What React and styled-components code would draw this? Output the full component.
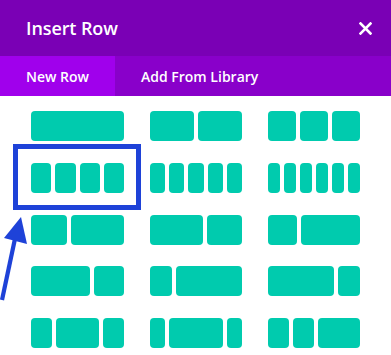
import styled, { createGlobalStyle } from "styled-components";

const GlobalStyle = createGlobalStyle`
  body {
    margin: 0;
    background: #ffffff;
    font-family: "Open Sans", "Liberation Sans", sans-serif;
  }
`;

const Modal = styled.div`
  position: relative;
  width: 391px;
  height: 355px;
  overflow: hidden;
  background: #ffffff;
`;

const Header = styled.div`
  height: 56px;
  display: flex;
  align-items: center;
  justify-content: space-between;
  padding: 0 19px 0 26px;
  background: #7a00b5;
  color: #ffffff;
`;

const Title = styled.h1`
  margin: 0;
  font-size: 18px;
  font-weight: 600;
  letter-spacing: -0.1px;
`;

const CloseButton = styled.button`
  width: 14px;
  height: 14px;
  padding: 0;
  border: none;
  background: none;
  display: flex;
  align-items: center;
  justify-content: center;
  cursor: pointer;
`;

const Tabs = styled.div`
  height: 40px;
  display: flex;
  background: #8900ca;
`;

const Tab = styled.div`
  display: flex;
  align-items: center;
  padding: 0 26px;
  font-size: 14px;
  font-weight: 600;
  color: #ffffff;
  background: ${(p) => (p.$active ? "#a000ec" : "transparent")};
`;

const Grid = styled.div`
  display: grid;
  grid-template-columns: 93px 92px 92px;
  grid-auto-rows: 30px;
  column-gap: 26px;
  row-gap: 21.75px;
  padding: 15px 0 0 31px;
`;

const Layout = styled.div`
  display: flex;
  gap: 4px;
  cursor: pointer;
`;

const Column = styled.div`
  flex: ${(p) => p.$grow} 1 0;
  background: #00cbae;
  border-radius: 4px;
`;

const Highlight = styled.div`
  position: absolute;
  left: 13px;
  top: 144px;
  width: 128px;
  height: 66px;
  box-sizing: border-box;
  border: 5px solid #1e42d8;
  pointer-events: none;
`;

const Arrow = styled.svg`
  position: absolute;
  left: 0;
  top: 214px;
  pointer-events: none;
`;

const layouts = [
  [1], [1, 1], [1, 1, 1],
  [1, 1, 1, 1], [1, 1, 1, 1, 1], [1, 1, 1, 1, 1, 1],
  [2, 3], [3, 2], [1, 2],
  [2, 1], [1, 3], [3, 1],
  [1, 2, 1], [1, 3.6, 1], [1, 1, 2],
];

const App = () => {
  return (
    <>
      <GlobalStyle />
      <Modal>
        <Header>
          <Title>Insert Row</Title>
          <CloseButton aria-label="Close">
            <svg width="13" height="13" viewBox="0 0 13 13">
              <path d="M1.5 1.5 L11.5 11.5 M11.5 1.5 L1.5 11.5" stroke="#fff" strokeWidth="2.6" strokeLinecap="square" />
            </svg>
          </CloseButton>
        </Header>
        <Tabs>
          <Tab $active>New Row</Tab>
          <Tab>Add From Library</Tab>
        </Tabs>
        <Grid>
          {layouts.map((cols, i) => (
            <Layout key={i}>
              {cols.map((g, j) => (
                <Column key={j} $grow={g} />
              ))}
            </Layout>
          ))}
        </Grid>
        <Highlight />
        <Arrow width="32" height="90" viewBox="0 0 32 90">
          <path d="M16 20 L2 86" stroke="#1e42d8" strokeWidth="4.2" />
          <path d="M21 3 L27 30 L4 24 Z" fill="#1e42d8" />
        </Arrow>
      </Modal>
    </>
  );
};

export default App;
